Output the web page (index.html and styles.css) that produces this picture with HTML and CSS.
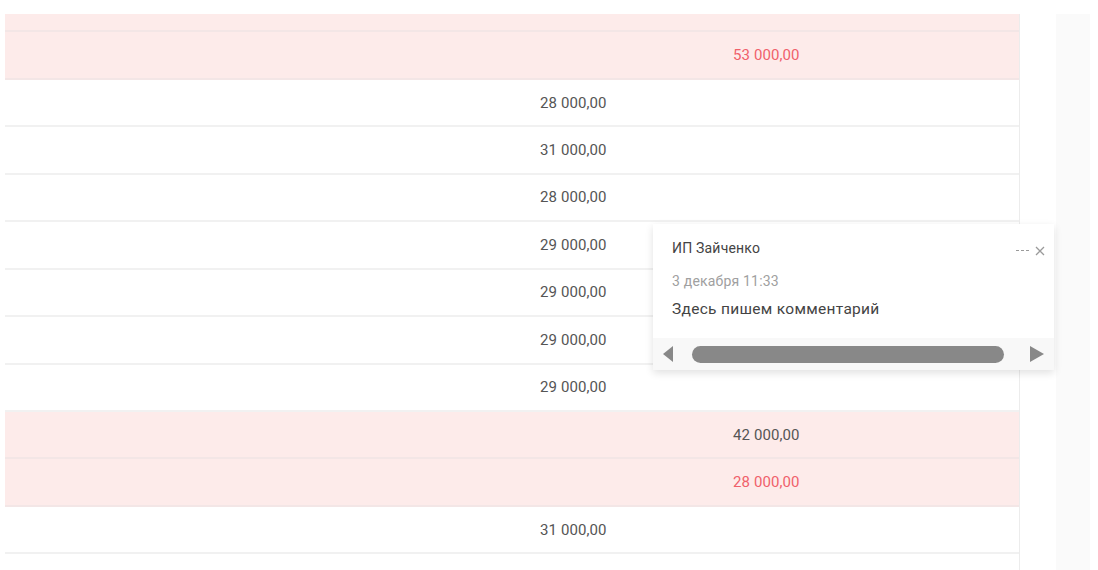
FILE: index.html
```html
<!DOCTYPE html>
<html lang="ru">
<head>
    <meta charset="UTF-8">
    <meta name="viewport" content="width=device-width, initial-scale=1.0">
    <title>Реестр платежей</title>
    <link rel="stylesheet" href="styles.css">
</head>
<body>
    <div class="page">
        <div class="table-wrap">
            <div class="table">
                <div class="row pink"><span></span><span></span><span class="cell"></span></div>
                <div class="row pink"><span></span><span></span><span class="cell red">53 000,00</span></div>
                <div class="row"><span></span><span class="cell">28 000,00</span><span></span></div>
                <div class="row"><span></span><span class="cell">31 000,00</span><span></span></div>
                <div class="row"><span></span><span class="cell">28 000,00</span><span></span></div>
                <div class="row"><span></span><span class="cell">29 000,00</span><span></span></div>
                <div class="row"><span></span><span class="cell">29 000,00</span><span></span></div>
                <div class="row"><span></span><span class="cell">29 000,00</span><span></span></div>
                <div class="row"><span></span><span class="cell">29 000,00</span><span></span></div>
                <div class="row pink"><span></span><span></span><span class="cell">42 000,00</span></div>
                <div class="row pink"><span></span><span></span><span class="cell red">28 000,00</span></div>
                <div class="row"><span></span><span class="cell">31 000,00</span><span></span></div>
                <div class="row"><span></span><span class="cell"></span><span></span></div>
            </div>
        </div>
        <div class="side"></div>

        <div class="comment">
            <div class="comment-head">
                <span class="author">ИП Зайченко</span>
                <span class="tools">
                    <span class="dots"></span>
                    <svg class="close" width="10" height="10" viewBox="0 0 10 10">
                        <path d="M1 1 L9 9 M9 1 L1 9" stroke="#9a9a9a" stroke-width="1.3" fill="none"/>
                    </svg>
                </span>
            </div>
            <div class="date">3 декабря 11:33</div>
            <div class="text">Здесь пишем комментарий</div>
            <div class="scroll">
                <span class="arrow left"></span>
                <span class="thumb"></span>
                <span class="arrow right"></span>
            </div>
        </div>
    </div>
</body>
</html>
```

FILE: styles.css
```css
body {
    margin: 0;
    padding: 0;
    background-color: #ffffff;
    font-family: Roboto, "Liberation Sans", Arial, sans-serif;
}
.page {
    display: flex;
    height: 570px;
    padding: 14px 0 0 5px;
    box-sizing: border-box;
    overflow: hidden;
    position: relative;
}
.table-wrap {
    width: 1014px;
    border-right: 1px solid #ececec;
    overflow: hidden;
}
.table {
    margin-top: -29px;
}
.row {
    display: grid;
    grid-template-columns: 535px 193px 1fr;
    align-items: center;
    height: 47.45px;
    box-sizing: border-box;
    border-bottom: 2px solid #f1f1f1;
    background-color: #ffffff;
}
.row.pink {
    background-color: #fdebea;
    border-bottom-color: #f3e6e6;
}
.cell {
    font-size: 15px;
    color: #555555;
    letter-spacing: 0.1px;
}
.cell.red {
    color: #f0606a;
}
.side {
    width: 34px;
    margin-left: 36px;
    background-color: #fafafa;
}
.comment {
    position: absolute;
    left: 653px;
    top: 224px;
    width: 401px;
    height: 146px;
    background: #ffffff;
    box-shadow: 0 3px 8px rgba(0, 0, 0, 0.12);
    display: flex;
    flex-direction: column;
}
.comment-head {
    display: flex;
    justify-content: space-between;
    align-items: center;
    padding: 16px 9px 0 19px;
    height: 16px;
}
.author {
    font-size: 14px;
    letter-spacing: 0.2px;
    color: #444444;
}
.tools {
    display: flex;
    align-items: center;
    gap: 6px;
    margin-top: 5px;
}
.dots {
    width: 13px;
    border-top: 1px dashed #9a9a9a;
}
.date {
    padding: 17px 0 0 19px;
    font-size: 14px;
    letter-spacing: 0.2px;
    line-height: 16px;
    color: #a0a0a0;
}
.text {
    padding: 12px 0 0 19px;
    font-size: 15.5px;
    letter-spacing: 0.3px;
    line-height: 16px;
    color: #444444;
}
.scroll {
    margin-top: auto;
    height: 32px;
    background-color: #f8f8f8;
    display: flex;
    align-items: center;
    padding: 0 9px 0 10px;
}
.arrow {
    width: 0;
    height: 0;
    border-top: 8px solid transparent;
    border-bottom: 8px solid transparent;
}
.arrow.left {
    border-right: 10px solid #888888;
}
.arrow.right {
    border-left: 14px solid #888888;
}
.thumb {
    width: 312px;
    height: 17px;
    margin: 0 26px 0 19px;
    border-radius: 9px;
    background-color: #888888;
}
```
